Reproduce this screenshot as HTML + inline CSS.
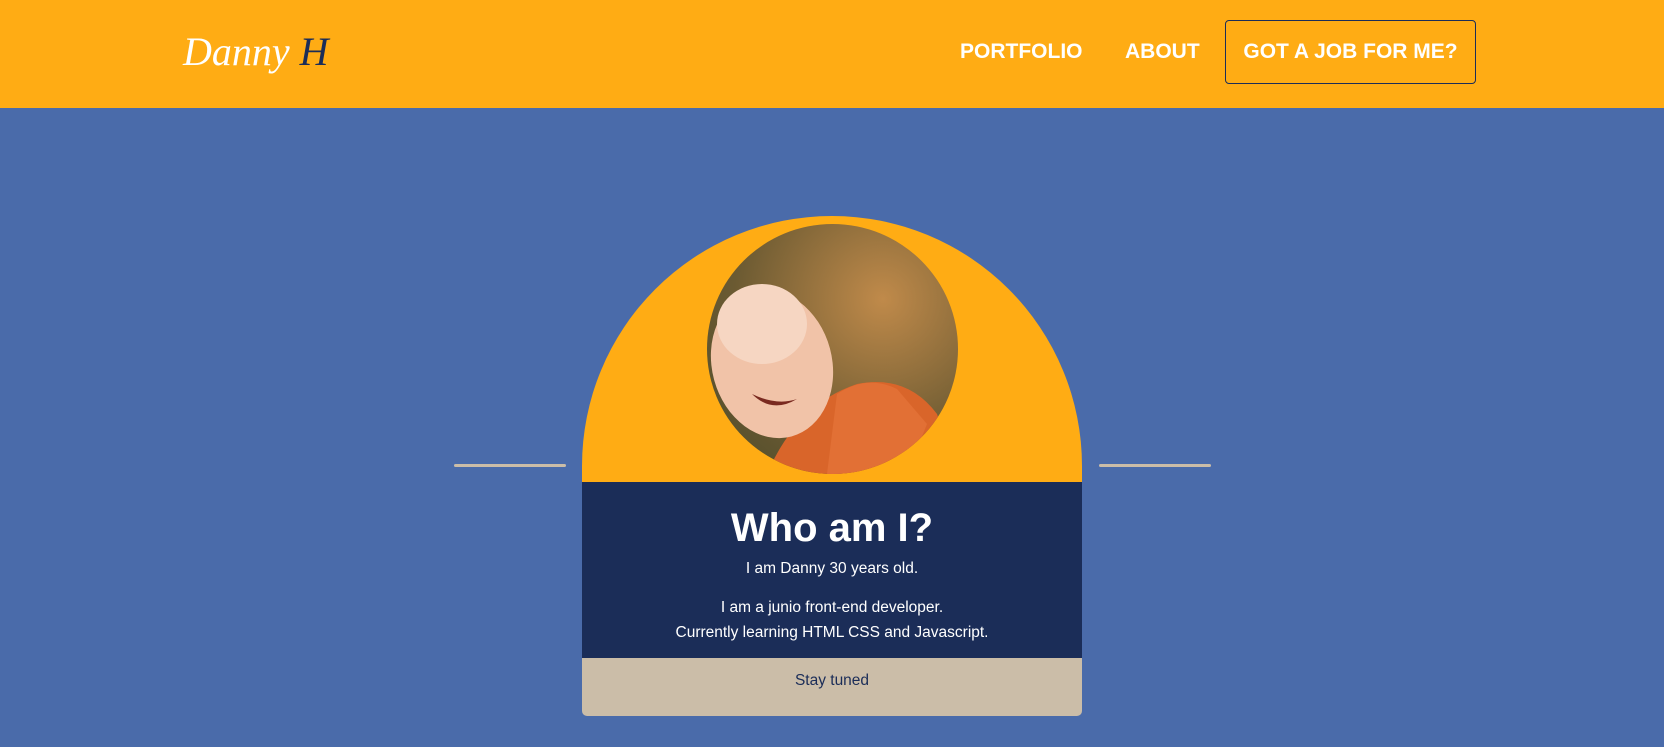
<!DOCTYPE html>
<html><head><meta charset="utf-8"><style>
*{margin:0;padding:0;box-sizing:border-box}
body{width:1664px;height:747px;background:#4a6baa;font-family:"Liberation Sans",sans-serif;position:relative;overflow:hidden}
header{position:absolute;left:0;top:0;width:1664px;height:108px;background:#ffac14}
.logo{position:absolute;left:183px;top:28px;font-family:"Liberation Serif",serif;font-style:italic;font-size:40px;color:#fff}
.logo span{color:#1b2d58}
.nav{position:absolute;top:40px;font-weight:bold;font-size:21px;color:#fff}
.btn{position:absolute;left:1225px;top:20px;width:251px;height:64px;border:1px solid #1b2d58;border-radius:4px;color:#fff;font-weight:bold;font-size:21px;text-align:center;line-height:62px}
.arch{position:absolute;left:582px;top:216px;width:500px;height:266px;background:#ffac14;border-radius:250px 250px 0 0}
.photo{position:absolute;left:707px;top:224px;width:251px;height:250px;border-radius:50%;overflow:hidden;background:radial-gradient(ellipse at 70% 30%,#c08a4a,#6b5a32 60%,#4a4a2a)}
.line{position:absolute;top:464px;width:112px;height:3px;background:#cbbda8;border-radius:2px}
.dark{position:absolute;left:582px;top:482px;width:500px;height:176px;background:#1b2d58;color:#fff;text-align:center;font-family:"Liberation Sans",sans-serif}
.dark h1{font-size:40px;font-weight:bold;margin-top:24px;line-height:44px}
.dark p{font-size:15.5px;line-height:25px}
.beige{position:absolute;left:582px;top:658px;width:500px;height:58px;background:#cbbda8;border-radius:0 0 5px 5px;text-align:center;color:#1b2d58;font-size:15.5px;padding-top:14px}
</style></head><body>
<header>
<div class="logo">Danny <span>H</span></div>
<div class="nav" style="left:960px">PORTFOLIO</div>
<div class="nav" style="left:1125px">ABOUT</div>
<div class="btn">GOT A JOB FOR ME?</div>
</header>
<div class="line" style="left:454px"></div>
<div class="line" style="left:1099px"></div>
<div class="arch"></div>
<div class="photo">
<svg width="251" height="250" viewBox="0 0 251 250">
<path d="M60 250 Q90 180 150 160 Q200 150 230 190 L251 250Z" fill="#d9652a"/>
<path d="M130 170 Q160 150 190 165 L220 200 L200 250 L120 250Z" fill="#e27035"/>
<ellipse cx="65" cy="140" rx="60" ry="75" fill="#f1c3a8" transform="rotate(-15 65 140)"/>
<ellipse cx="55" cy="100" rx="45" ry="40" fill="#f6d6c2"/>
<path d="M45 170 Q65 190 90 175 Q70 182 45 170Z" fill="#7a2a20"/>
</svg>
</div>
<div class="dark">
<h1>Who am I?</h1>
<p style="margin-top:6px">I am Danny 30 years old.</p>
<p style="margin-top:14px">I am a junio front-end developer.<br>Currently learning HTML CSS and Javascript.</p>
</div>
<div class="beige">Stay tuned</div>
</body></html>
